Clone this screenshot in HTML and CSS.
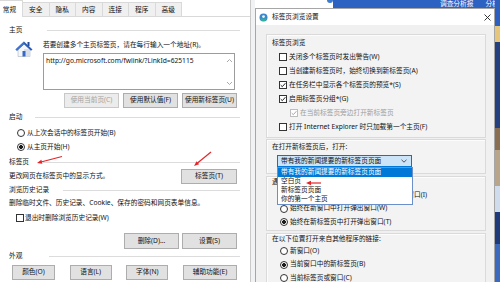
FILE: index.html
```html
<!DOCTYPE html>
<html lang="zh-CN">
<head>
<meta charset="utf-8">
<title>Internet 选项</title>
<link rel="stylesheet" href="styles.css">
</head>
<body>
<div class="screen">
  <section class="opt">
    <nav class="tabs">
      <span class="tab sel">常规</span>
      <span class="tab">安全</span>
      <span class="tab">隐私</span>
      <span class="tab">内容</span>
      <span class="tab">连接</span>
      <span class="tab">程序</span>
      <span class="tab">高级</span>
      <span class="tab-fill"></span>
    </nav>
    <div class="panel">
      <div class="head h-home"><span>主页</span><i class="rule"></i></div>
      <div class="home">
        <svg class="house" width="18" height="17" viewBox="0 0 18 17">
          <path d="M3 9 9 4l6 5v7.5H3z" fill="#f4f6f9" stroke="#9aa6b5" stroke-width=".5"/>
          <path d="M9 9h6v7.5H9z" fill="#d9dfe8"/>
          <rect x="12.5" y="2" width="2" height="4" fill="#23499a"/>
          <path d="M.5 9.5 9 1.5l8.5 8-1.5 1.3L9 4.3 2 10.8z" fill="#2a5cb8"/>
          <path d="M9 1.5.5 9.5 2 10.8 9 4.3z" fill="#3f74d4"/>
          <rect x="7.5" y="11" width="3" height="5.5" fill="#3668c7"/>
        </svg>
        <div class="home-main">
          <p class="line">若要创建多个主页标签页，请在每行输入一个地址(R)。</p>
          <div class="urlbox">
            <span class="url">http://go.microsoft.com/fwlink/?LinkId=625115</span>
            <span class="sbar">
              <svg width="7" height="5" viewBox="0 0 7 5"><path d="M1 4 3.5 1.5 6 4" fill="none" stroke="#a9a9a9" stroke-width="1"/></svg>
              <svg width="7" height="5" viewBox="0 0 7 5"><path d="M1 1 3.5 3.5 6 1" fill="none" stroke="#a9a9a9" stroke-width="1"/></svg>
            </span>
          </div>
        </div>
      </div>
      <div class="btns b-home">
        <span class="btn dis">使用当前页(C)</span>
        <span class="btn">使用默认值(F)</span>
        <span class="btn">使用新标签页(U)</span>
      </div>
      <div class="head h-start"><span>启动</span><i class="rule"></i></div>
      <div class="orow r1"><i class="radio"></i>从上次会话中的标签页开始(B)</div>
      <div class="orow r2"><i class="radio on"></i>从主页开始(H)</div>
      <div class="head h-tabs"><span>标签页</span><i class="rule"></i></div>
      <div class="tabrow"><span class="desc">更改网页在标签页中的显示方式。</span><span class="btn">标签页(T)</span></div>
      <div class="head h-hist"><span>浏览历史记录</span><i class="rule"></i></div>
      <p class="line hist-desc">删除临时文件、历史记录、Cookie、保存的密码和网页表单信息。</p>
      <div class="orow r3"><i class="cb"></i>退出时删除浏览历史记录(W)</div>
      <div class="btns b-hist"><span class="btn">删除(D)...</span><span class="btn">设置(S)</span></div>
      <div class="head h-look"><span>外观</span><i class="rule"></i></div>
      <div class="btns b-look">
        <span class="btn bl1">颜色(O)</span>
        <span class="btn bl2">语言(L)</span>
        <span class="btn bl3">字体(N)</span>
        <span class="btn bl4">辅助功能(E)</span>
      </div>
    </div>
  </section>

  <div class="frame"></div>

  <section class="right">
    <div class="bgtop">
      <span class="bg-w"><i class="bg-dot"></i></span>
      <span class="bg-b"><span>调查分析报</span><span>分析</span></span>
    </div>
    <div class="win">
      <div class="titlebar">
        <svg class="ticon" width="9" height="9" viewBox="0 0 9 9"><circle cx="4.5" cy="4.5" r="4" fill="#3b86d0"/><path d="M1.1 5.4A3.5 3.5 0 0 0 7.9 5.4z" fill="#2fae9a"/><circle cx="4.5" cy="3.6" r="1.4" fill="#e8f3fb"/></svg>
        <span class="ttl">标签页浏览设置</span>
        <svg class="close" width="7" height="7" viewBox="0 0 7 7"><path d="M.5.5l6 6M6.5.5l-6 6" stroke="#222" stroke-width=".9"/></svg>
      </div>
      <div class="wbody">
        <div class="grp g1">
          <div class="glabel">标签页浏览</div>
          <div class="row chk"><i class="cb"></i>关闭多个标签页时发出警告(W)</div>
          <div class="row chk"><i class="cb"></i>当创建新标签页时，始终切换到新标签页(A)</div>
          <div class="row chk"><i class="cb"><svg width="6" height="6" viewBox="0 0 6 6"><path d="M.7 3.1 2.3 4.7 5.4 1.2" fill="none" stroke="#222" stroke-width="1"/></svg></i>在任务栏中显示各个标签页的预览*(S)</div>
          <div class="row chk"><i class="cb"><svg width="6" height="6" viewBox="0 0 6 6"><path d="M.7 3.1 2.3 4.7 5.4 1.2" fill="none" stroke="#222" stroke-width="1"/></svg></i>启用标签页分组*(G)</div>
          <div class="row chk sub"><i class="cb"><svg width="6" height="6" viewBox="0 0 6 6"><path d="M.7 3.1 2.3 4.7 5.4 1.2" fill="none" stroke="#a6a6a6" stroke-width="1"/></svg></i>在当前标签页旁边打开新标签页</div>
          <div class="row chk"><i class="cb"></i>打开 Internet Explorer 时只加载第一个主页(F)</div>
        </div>
        <div class="grp g2">
          <div class="glabel">在打开新标签页后，打开:</div>
          <div class="select">
            <span>带有我的新闻提要的新标签页页面</span>
            <svg class="chev" width="6" height="4" viewBox="0 0 6 4"><path d="M.5.8 3 3.2 5.5.8" fill="none" stroke="#444" stroke-width=".9"/></svg>
            <ul class="list">
              <li class="hl">带有我的新闻提要的新标签页页面</li>
              <li>空白页</li>
              <li>新标签页页面</li>
              <li>你的第一个主页</li>
            </ul>
          </div>
        </div>
        <div class="grp g3">
          <div class="glabel">遇到弹出窗口时:</div>
          <div class="row rad ra"><i class="radio"></i>让 Internet Explorer 决定如何打开弹出窗口(I)</div>
          <div class="row rad rb"><i class="radio"></i>始终在新窗口中打开弹出窗口(W)</div>
          <div class="row rad ra"><i class="radio on"></i>始终在新标签页中打开弹出窗口(T)</div>
        </div>
        <div class="grp g4">
          <div class="glabel">在以下位置打开来自其他程序的链接:</div>
          <div class="row rad ra"><i class="radio"></i>新窗口(O)</div>
          <div class="row rad rb"><i class="radio on"></i>当前窗口中的新标签页(B)</div>
          <div class="row rad ra"><i class="radio"></i>当前标签页或窗口(C)</div>
        </div>
      </div>
    </div>
  </section>

  <div class="edge"></div>

  <svg class="marks" width="500" height="282" viewBox="0 0 500 282">
    <g stroke="#e3262a" stroke-width="1.2" fill="none">
      <path d="M62 156.5 41 162"/>
      <path d="M211 152 197.5 163"/>
      <path d="M321 183H310"/>
    </g>
    <g fill="#e3262a">
      <path d="M37 163 41.35 159.8 42.35 163.68z"/>
      <path d="M194 166 196.59 161.28 199.13 164.36z"/>
      <path d="M306 183 311 180.8 311 185.2z"/>
    </g>
  </svg>
</div>
</body>
</html>
```

FILE: styles.css
```css
* { box-sizing: border-box; margin: 0; padding: 0; }
html, body { width: 500px; height: 282px; overflow: hidden; background: #fff; }
body {
  font-family: "Noto Sans", "Noto Sans CJK SC", sans-serif;
  font-size: 6.7px;
  line-height: 1;
  color: #111;
}
ul { list-style: none; }
i { display: block; font-style: normal; }

.screen { position: relative; display: flex; width: 500px; height: 282px; overflow: hidden; }

/* ---------- left: Internet options ---------- */
.opt {
  width: 251px; height: 282px; flex: none;
  display: flex; flex-direction: column;
  background: #fff; border-right: 1px solid #c9c9c9;
}
.tabs { display: flex; height: 17px; flex: none; }
.tab {
  width: 26.5px; flex: none; margin-top: 2px; padding-top: 2px;
  display: flex; align-items: center; justify-content: center;
  background: #f0f0f0; border: 1px solid #d9d9d9; border-left: none;
  white-space: nowrap;
}
.tab.sel {
  width: 23px; margin-top: 0; padding: 2px 3px 0 0;
  background: #fff; border-bottom: none;
}
.tab-fill { flex: 1; border-bottom: 1px solid #d9d9d9; }

.panel { flex: 1; display: flex; flex-direction: column; padding: 0 10px 0 9px; }
.panel > * { flex: none; }

.head { display: flex; align-items: center; height: 12px; white-space: nowrap; }
.head .rule { flex: 1; height: 1px; background: #dcdcdc; }
.h-home { margin-top: 7px; }
.h-home .rule { margin-left: 25px; }
.h-start { margin-top: 3px; }
.h-start .rule { margin-left: 13px; }
.h-tabs { margin-top: 3px; }
.h-tabs .rule { margin-left: 14px; }
.h-hist { margin-top: 0; }
.h-hist .rule { margin-left: 14px; }
.h-look { margin-top: 1px; }
.h-look .rule { margin-left: 27px; }

.line { height: 10px; display: flex; align-items: center; white-space: nowrap; }

.home { display: flex; margin-top: 4px; height: 50px; }
.house { flex: none; margin-left: 6px; }
.home-main { flex: 1; margin-left: 10px; margin-right: 5px; display: flex; flex-direction: column; }
.urlbox {
  margin-top: 3px; height: 37px; display: flex;
  border: 1px solid #9c9c9c; background: #fff;
}
.url { flex: 1; padding: 2px 0 0 2px; line-height: 10px; height: 12px; white-space: nowrap; }
.sbar {
  width: 10px; display: flex; flex-direction: column; align-items: center;
  justify-content: space-between; padding: 4px 0 3px;
}
.sbar svg { display: block; }

.btns { display: flex; }
.btn {
  display: flex; align-items: center; justify-content: center;
  background: #e1e1e1; border: 1px solid #adadad; white-space: nowrap;
  flex: none;
}
.btn.dis { color: #a3a3a3; background: #ececec; border-color: #c8c8c8; }
.b-home { margin-top: 3px; height: 15px; justify-content: flex-end; gap: 4px; margin-right: 3px; }
.b-home .btn { width: 55px; }
.b-hist { margin-top: 9px; height: 16px; justify-content: flex-end; gap: 3px; margin-right: 3px; }
.b-hist .btn { width: 55px; }
.b-look { margin-top: 3px; height: 15px; justify-content: space-between; padding: 0 3px; }
.bl1 { width: 43px; }
.bl2 { width: 42px; }
.bl3 { width: 42px; }
.bl4 { width: 54px; }

.orow { display: flex; align-items: center; height: 12px; gap: 2px; padding-left: 8px; white-space: nowrap; }
.r1 { margin-top: 4px; }
.r2 { margin-top: 2px; }
.r3 { margin-top: 3px; padding-left: 7px; gap: 1px; }

.radio {
  width: 8px; height: 8px; flex: none; border-radius: 50%;
  border: 1px solid #333; background: #fff;
}
.radio.on { background: radial-gradient(circle, #1c1c1c 0 1.7px, #fff 2.2px); }
.cb {
  width: 8px; height: 8px; flex: none; border: 1px solid #333; background: #fff;
  display: flex; align-items: center; justify-content: center;
}
.cb svg { display: block; }

.tabrow { display: flex; align-items: center; height: 15px; margin-top: 1px; }
.tabrow .desc { flex: 1; white-space: nowrap; }
.tabrow .btn { width: 56px; height: 15px; margin-right: 3px; }
.hist-desc { height: 12px; margin-top: 1px; }

/* ---------- frame between windows ---------- */
.frame { width: 4px; flex: none; background: #f1f2f3; }

/* ---------- right: tab browsing settings ---------- */
.right { width: 240px; height: 282px; flex: none; display: flex; flex-direction: column; }
.bgtop { height: 8px; flex: none; display: flex; }
.bg-w { width: 78px; background: #fff; display: flex; justify-content: flex-end; }
.bg-dot { width: 6px; height: 3px; margin-right: 0; border-radius: 0 0 3px 3px; background: #3d7ad0; }
.bg-b {
  flex: 1; display: flex; gap: 12px; padding-left: 107px; align-items: center;
  background: #2d61c2; color: #fff; white-space: nowrap; overflow: hidden;
}
.win {
  flex: 1; min-height: 0; display: flex; flex-direction: column; overflow: hidden;
  border: 1px solid #a6a6a6; border-bottom: none; background: #f0f0f0;
}
.titlebar { height: 16px; flex: none; display: flex; align-items: center; padding: 0 3px; background: #fff; }
.ticon { flex: none; display: block; }
.ttl { margin-left: 4px; }
.close { margin-left: auto; display: block; }

.wbody { display: flex; flex-direction: column; padding: 9px 8px 0 10px; }
.grp {
  flex: none; border: 1px solid #dadada; background: #f3f3f3;
  box-shadow: inset 1px 1px 0 #fcfcfc;
}
.glabel { height: 14px; display: flex; align-items: center; padding-left: 5px; white-space: nowrap; }
.row { height: 14px; display: flex; align-items: center; gap: 2px; white-space: nowrap; }
.chk { margin-left: 12px; }
.chk.sub { margin-left: 23px; color: #9d9d9d; }
.chk.sub .cb { border-color: #bdbdbd; }
.rad { margin-left: 13px; }
.rb { height: 13px; }

.g1 { padding: 1px 0 3px; }
.g2 { margin-top: 1px; padding-bottom: 6px; }
.g3 { margin-top: 2px; padding-bottom: 1px; }
.g3 .glabel { height: 11px; }
.g4 { margin-top: 2px; }
.g4 .glabel { height: 10px; }
.g4 .row:first-of-type { margin-top: 2px; }

.select {
  position: relative; margin-left: 10px; width: 135px; height: 12px; margin-top: 1px;
  display: flex; align-items: center; padding: 0 3px;
  border: 1px solid #0078d7; background: #cce4f7; white-space: nowrap;
}
.chev { margin-left: auto; margin-right: 1px; display: block; }
.list {
  position: absolute; left: -1px; top: 11px; width: 136px; z-index: 3;
  border: 1px solid #6b8fc9; background: #fff;
}
.list li { height: 9px; display: flex; align-items: center; padding-left: 3px; white-space: nowrap; }
.list li.hl { background: #0078d7; color: #fff; }

/* ---------- right edge of background page ---------- */
.edge {
  width: 5px; flex: none;
  background: linear-gradient(to bottom,
    #2c5fbf 0 26px, #e6c67a 26px 42px, #24407e 42px 128px,
    #8a6e52 128px 150px, #b9a58a 150px 186px, #cfdcee 186px 212px,
    #1f3a78 212px 244px, #3b69bd 244px);
}

.marks { position: absolute; left: 0; top: 0; pointer-events: none; z-index: 10; }
```
